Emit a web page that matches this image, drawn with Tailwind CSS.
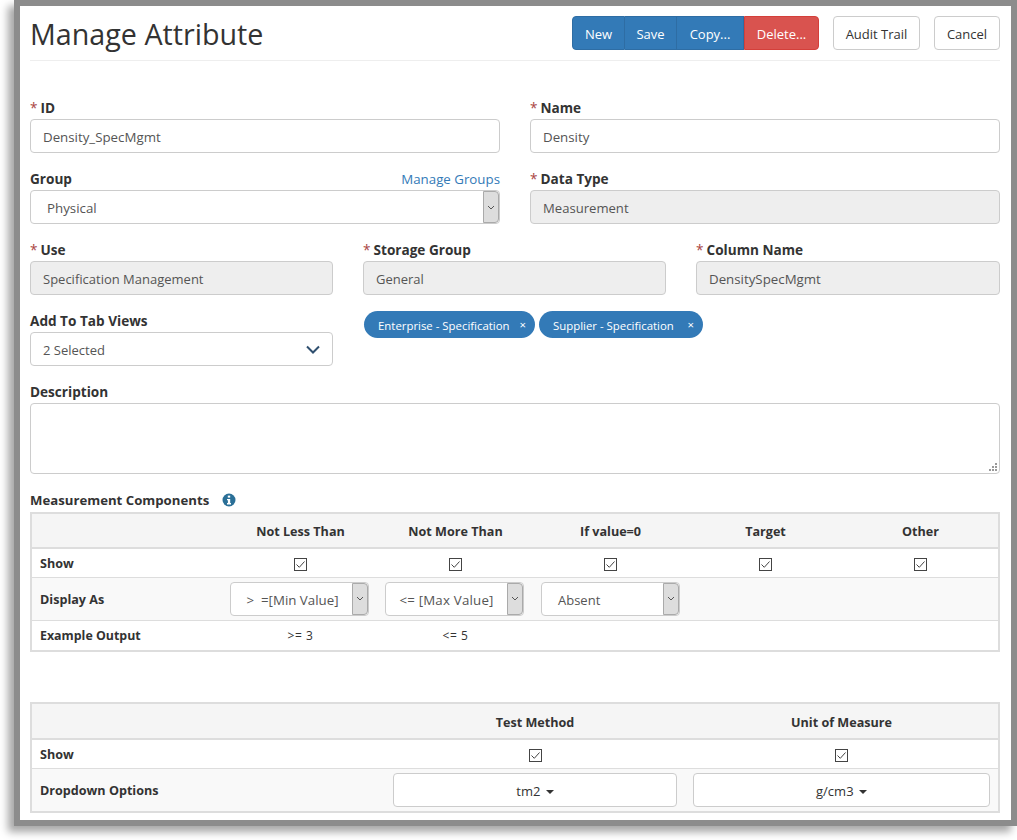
<!DOCTYPE html>
<html lang="en">
<head>
    <meta charset="utf-8">
    <title>Manage Attribute</title>
    <script src="https://cdn.jsdelivr.net/npm/@tailwindcss/browser@4"></script>
</head>
<body class="h-[840px] bg-white font-['Open_Sans',sans-serif] text-[13.3px] text-[#333] overflow-hidden">
<div class="ml-[14px] w-[1003px] h-[826px] border-[6px] border-[#8c8c8c] bg-white px-[10px] pr-[11px] shadow-[-6px_6px_8px_rgba(0,0,0,0.35)]">

    <!-- header -->
    <div class="flex items-start justify-between h-[55px] border-b border-[#eee] pt-[10px]">
        <h1 class="text-[28.7px] leading-[36px] text-[#333]">Manage Attribute</h1>
        <div class="flex text-[13px]">
            <div class="flex text-white">
                <button class="h-[34px] w-[53px] pt-[3px] bg-[#337ab7] border border-[#2e6da4] rounded-l">New</button>
                <button class="h-[34px] w-[52px] pt-[3px] bg-[#337ab7] border border-[#2e6da4] border-l-0">Save</button>
                <button class="h-[34px] w-[67px] pt-[3px] bg-[#337ab7] border border-[#2e6da4] border-l-0">Copy...</button>
                <button class="h-[34px] w-[75px] pt-[3px] bg-[#d9534f] border border-[#d43f3a] rounded-r">Delete...</button>
            </div>
            <button class="h-[34px] w-[87px] ml-[14px] pt-[3px] border border-[#ccc] rounded">Audit Trail</button>
            <button class="h-[34px] w-[66px] ml-[14px] pt-[3px] border border-[#ccc] rounded">Cancel</button>
        </div>
    </div>

    <!-- id / name -->
    <div class="grid grid-cols-2 gap-x-[30px] mt-[35px]">
        <div class="mb-[14px]">
            <label class="block h-[23px] leading-[24px] text-[13.6px] font-bold"><span class="text-[#a94442] font-normal mr-[3px]">*</span>ID</label>
            <input class="block w-full h-[34px] px-3 pt-[2px] border border-[#ccc] rounded text-[#555]" value="Density_SpecMgmt">
        </div>
        <div class="mb-[14px]">
            <label class="block h-[23px] leading-[24px] text-[13.6px] font-bold"><span class="text-[#a94442] font-normal mr-[3px]">*</span>Name</label>
            <input class="block w-full h-[34px] px-3 pt-[2px] border border-[#ccc] rounded text-[#555]" value="Density">
        </div>
        <div class="mb-[14px]">
            <div class="flex justify-between h-[23px] leading-[24px]">
                <label class="text-[13.6px] font-bold">Group</label>
                <a class="text-[#337ab7]">Manage Groups</a>
            </div>
            <div class="flex h-[34px] border border-[#ccc] rounded text-[#555]">
                <span class="flex-1 pl-4 leading-[34px]">Physical</span>
                <span class="flex w-[16px] items-center justify-center bg-[#ddd] border border-[#aaa] rounded-r">
                    <svg width="8" height="5" viewBox="0 0 8 5" fill="none" stroke="#555"><path d="M1 1l3 3 3-3"/></svg>
                </span>
            </div>
        </div>
        <div class="mb-[14px]">
            <label class="block h-[23px] leading-[24px] text-[13.6px] font-bold"><span class="text-[#a94442] font-normal mr-[3px]">*</span>Data Type</label>
            <input readonly class="block w-full h-[34px] px-3 pt-[2px] border border-[#ccc] rounded bg-[#eee] text-[#555] text-[13.1px]" value="Measurement">
        </div>
    </div>

    <!-- use / storage / column -->
    <div class="grid grid-cols-[303px_303px_304px] gap-x-[30px]">
        <div class="mb-[14px]">
            <label class="block h-[23px] leading-[24px] text-[13.6px] font-bold"><span class="text-[#a94442] font-normal mr-[3px]">*</span>Use</label>
            <input readonly class="block w-full h-[34px] px-3 pt-[2px] border border-[#ccc] rounded bg-[#eee] text-[#555] text-[13px]" value="Specification Management">
        </div>
        <div class="mb-[14px]">
            <label class="block h-[23px] leading-[24px] text-[13.6px] font-bold"><span class="text-[#a94442] font-normal mr-[3px]">*</span>Storage Group</label>
            <input readonly class="block w-full h-[34px] px-3 pt-[2px] border border-[#ccc] rounded bg-[#eee] text-[#555] text-[13px]" value="General">
        </div>
        <div class="mb-[14px]">
            <label class="block h-[23px] leading-[24px] text-[13.6px] font-bold"><span class="text-[#a94442] font-normal mr-[3px]">*</span>Column Name</label>
            <input readonly class="block w-full h-[34px] px-3 pt-[2px] border border-[#ccc] rounded bg-[#eee] text-[#555]" value="DensitySpecMgmt">
        </div>
    </div>

    <!-- tab views -->
    <div class="flex mb-[14px]">
        <div class="w-[303px]">
            <label class="block h-[23px] leading-[24px] text-[13.6px] font-bold">Add To Tab Views</label>
            <div class="flex items-center justify-between h-[34px] pl-3 pr-[12px] border border-[#ccc] rounded text-[#555]">
                <span class="pt-[3px] text-[13px]">2 Selected</span>
                <svg width="14" height="9" viewBox="0 0 14 9" fill="none" stroke="#2f4f6f" stroke-width="2"><path d="M1 1.5l6 6 6-6"/></svg>
            </div>
        </div>
        <div class="flex gap-1 ml-[31px] mt-[2px] h-[27px] text-white text-[11.4px]">
            <span class="flex items-center justify-between w-[171px] pl-[14px] pr-[9px] bg-[#337ab7] rounded-full"><span class="pt-[2px]">Enterprise - Specification</span> <span>×</span></span>
            <span class="flex items-center justify-between w-[164px] pl-[14px] pr-[9px] bg-[#337ab7] rounded-full"><span class="pt-[2px]">Supplier - Specification</span> <span>×</span></span>
        </div>
    </div>

    <!-- description -->
    <label class="block h-[23px] leading-[24px] text-[13.6px] font-bold">Description</label>
    <div class="relative mb-[14px]">
        <textarea class="block w-full h-[71px] border border-[#ccc] rounded resize-none"></textarea>
        <svg class="absolute right-[3px] bottom-[3px]" width="8" height="8" viewBox="0 0 8 8" fill="#999"><rect x="6" y="0" width="2" height="2"/><rect x="3" y="3" width="2" height="2"/><rect x="6" y="3" width="2" height="2"/><rect x="0" y="6" width="2" height="2"/><rect x="3" y="6" width="2" height="2"/><rect x="6" y="6" width="2" height="2"/></svg>
    </div>

    <!-- measurement components -->
    <div class="flex items-center h-[24px] text-[13.2px] font-bold">
        <span class="pt-[2px]">Measurement Components</span>
        <svg class="ml-[13px]" width="14" height="14" viewBox="0 0 14 14"><circle cx="7" cy="7" r="6.5" fill="#2a6f97"/><rect x="5.8" y="2.6" width="2.4" height="2" fill="#fff"/><path d="M5 6h3.2v4H9v1.4H5V10h.9V7.3H5z" fill="#fff"/></svg>
    </div>
    <table class="w-full table-fixed border-collapse border-2 border-[#ddd] text-[12.6px]">
        <colgroup><col class="w-[192px]"><col class="w-[155px]"><col class="w-[155px]"><col class="w-[155px]"><col class="w-[155px]"><col></colgroup>
        <thead>
            <tr class="h-[35px] bg-[#f5f5f5] border-b-2 border-[#ddd] font-bold text-center">
                <td></td><td class="pt-[4px]">Not Less Than</td><td class="pt-[4px]">Not More Than</td><td class="pt-[4px]">If value=0</td><td class="pt-[4px]">Target</td><td class="pt-[4px]">Other</td>
            </tr>
        </thead>
        <tbody>
            <tr class="h-[29px] border-b border-[#ddd]">
                <td class="pl-2 pt-[4px] font-bold">Show</td>
                <td class="pt-[4px]"><svg class="mx-auto" width="13" height="13" viewBox="0 0 13 13" fill="none" stroke="#444"><rect x=".5" y=".5" width="12" height="12"/><path d="M2.5 6.5l2.8 2.8L10.5 3.5"/></svg></td>
                <td class="pt-[4px]"><svg class="mx-auto" width="13" height="13" viewBox="0 0 13 13" fill="none" stroke="#444"><rect x=".5" y=".5" width="12" height="12"/><path d="M2.5 6.5l2.8 2.8L10.5 3.5"/></svg></td>
                <td class="pt-[4px]"><svg class="mx-auto" width="13" height="13" viewBox="0 0 13 13" fill="none" stroke="#444"><rect x=".5" y=".5" width="12" height="12"/><path d="M2.5 6.5l2.8 2.8L10.5 3.5"/></svg></td>
                <td class="pt-[4px]"><svg class="mx-auto" width="13" height="13" viewBox="0 0 13 13" fill="none" stroke="#444"><rect x=".5" y=".5" width="12" height="12"/><path d="M2.5 6.5l2.8 2.8L10.5 3.5"/></svg></td>
                <td class="pt-[4px]"><svg class="mx-auto" width="13" height="13" viewBox="0 0 13 13" fill="none" stroke="#444"><rect x=".5" y=".5" width="12" height="12"/><path d="M2.5 6.5l2.8 2.8L10.5 3.5"/></svg></td>
            </tr>
            <tr class="h-[43px] bg-[#f9f9f9] border-b border-[#ddd]">
                <td class="pl-2 pt-[4px] font-bold">Display As</td>
                <td class="pl-[7px] pr-[9px]">
                    <div class="flex h-[34px] bg-white border border-[#ccc] rounded text-[#555] text-[13.3px]">
                        <span class="flex-1 pl-[2px] text-center leading-[34px]">&gt;&nbsp;&nbsp;=[Min Value]</span>
                        <span class="flex w-[16px] items-center justify-center bg-[#ddd] border border-[#aaa] rounded-r"><svg width="8" height="5" viewBox="0 0 8 5" fill="none" stroke="#555"><path d="M1 1l3 3 3-3"/></svg></span>
                    </div>
                </td>
                <td class="pl-[7px] pr-[9px]">
                    <div class="flex h-[34px] bg-white border border-[#ccc] rounded text-[#555] text-[13.3px]">
                        <span class="flex-1 text-center leading-[34px] tracking-[0.2px]">&lt;= [Max Value]</span>
                        <span class="flex w-[16px] items-center justify-center bg-[#ddd] border border-[#aaa] rounded-r"><svg width="8" height="5" viewBox="0 0 8 5" fill="none" stroke="#555"><path d="M1 1l3 3 3-3"/></svg></span>
                    </div>
                </td>
                <td class="px-2">
                    <div class="flex h-[34px] bg-white border border-[#ccc] rounded text-[#555] text-[13px]">
                        <span class="flex-1 pl-4 leading-[34px]">Absent</span>
                        <span class="flex w-[16px] items-center justify-center bg-[#ddd] border border-[#aaa] rounded-r"><svg width="8" height="5" viewBox="0 0 8 5" fill="none" stroke="#555"><path d="M1 1l3 3 3-3"/></svg></span>
                    </div>
                </td>
                <td></td><td></td>
            </tr>
            <tr class="h-[31px]">
                <td class="pl-2 pt-[2px] font-bold text-[12.4px]">Example Output</td>
                <td class="pt-[2px] text-center text-[12px] tracking-[0.6px]">&gt;= 3</td>
                <td class="pt-[2px] text-center text-[12px] tracking-[0.6px]">&lt;= 5</td>
                <td></td><td></td><td></td>
            </tr>
        </tbody>
    </table>

    <!-- test method / uom -->
    <table class="w-full table-fixed border-collapse border-2 border-[#ddd] mt-[50px] text-[12.6px]">
        <colgroup><col class="w-[354px]"><col class="w-[300px]"><col></colgroup>
        <thead>
            <tr class="h-[36px] bg-[#f5f5f5] border-b-2 border-[#ddd] font-bold text-center">
                <td></td><td class="pt-[4px]">Test Method</td><td class="pt-[4px]">Unit of Measure</td>
            </tr>
        </thead>
        <tbody>
            <tr class="h-[29px] border-b border-[#ddd]">
                <td class="pl-2 pt-[4px] font-bold">Show</td>
                <td class="pt-[4px]"><svg class="mx-auto" width="13" height="13" viewBox="0 0 13 13" fill="none" stroke="#444"><rect x=".5" y=".5" width="12" height="12"/><path d="M2.5 6.5l2.8 2.8L10.5 3.5"/></svg></td>
                <td class="pt-[4px]"><svg class="mx-auto" width="13" height="13" viewBox="0 0 13 13" fill="none" stroke="#444"><rect x=".5" y=".5" width="12" height="12"/><path d="M2.5 6.5l2.8 2.8L10.5 3.5"/></svg></td>
            </tr>
            <tr class="h-[44px] bg-[#f9f9f9]">
                <td class="pl-2 pt-[4px] font-bold">Dropdown Options</td>
                <td class="px-2"><button class="w-full h-[34px] pt-[3px] bg-white border border-[#ccc] rounded text-[13px]">tm2 <span class="inline-block ml-[2px] align-middle border-x-4 border-t-4 border-x-transparent border-t-[#333]"></span></button></td>
                <td class="px-2"><button class="w-full h-[34px] pt-[3px] bg-white border border-[#ccc] rounded text-[13px]">g/cm3 <span class="inline-block ml-[2px] align-middle border-x-4 border-t-4 border-x-transparent border-t-[#333]"></span></button></td>
            </tr>
        </tbody>
    </table>
</div>
</body>
</html>
